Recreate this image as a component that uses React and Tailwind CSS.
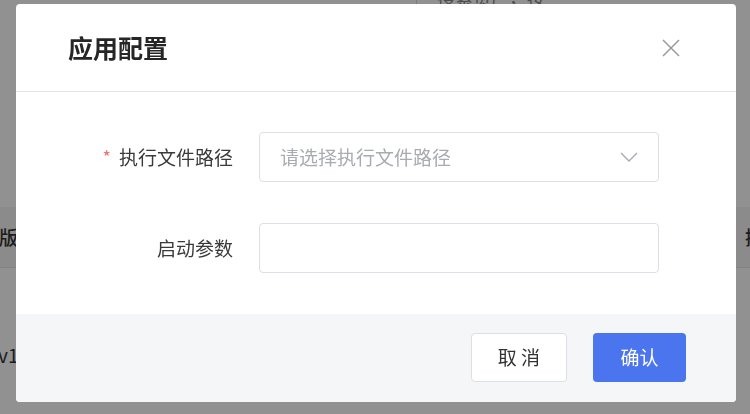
const font = { fontFamily: '"Noto Sans CJK SC", "Noto Sans", sans-serif' };

function BackgroundPage() {
  return (
    <div className="min-h-[414px] w-[750px] overflow-hidden bg-white text-[#333]">
      <div className="flex h-[92px] items-start">
        <div className="ml-[416px] h-[40px] w-px bg-[#d9d9d9]" />
        <span className="ml-[20px] mt-[-16px] text-[18px] text-[#888]">搜索资产，按</span>
      </div>
      <div className="mt-[115px] flex h-[61px] items-center justify-between border-b border-[#e6e6e6] bg-[#f5f5f5] text-[19px] font-medium">
        <span className="ml-[-1px]">版本</span>
        <span className="mr-[-33px]">操作</span>
      </div>
      <div className="flex h-[176px] items-center pb-[2px] text-[19px]">
        <span className="ml-[-2px]">v1.0.0</span>
      </div>
    </div>
  );
}

function FormRow({ label, required, children }) {
  return (
    <div className="flex items-center">
      <div className="flex w-[217px] items-center justify-end text-[19px] text-[#3a3a3a]">
        {required && <span className="mr-[8px] mt-[-2px] text-[18px] text-[#f56c6c]">*</span>}
        {label}
      </div>
      <div className="ml-[26px] w-[400px]">{children}</div>
    </div>
  );
}

export default function App() {
  return (
    <div className="relative h-[414px] w-[750px] overflow-hidden" style={font}>
      <BackgroundPage />
      <div className="fixed inset-0 bg-black/[0.43] pl-[16px] pt-[4px]">
        <div className="flex h-[398px] w-[720px] flex-col overflow-hidden rounded-[4px] bg-white">
          <div className="flex h-[88px] shrink-0 items-center justify-between border-b border-[#e4e4e9] pl-[52px] pr-[56px]">
            <h2 className="text-[25px] font-semibold text-[#262626]">应用配置</h2>
            <svg width="18" height="18" viewBox="0 0 18 18" fill="none" stroke="#9a9a9a" strokeWidth="1.5">
              <path d="M1 1l16 16M17 1L1 17" />
            </svg>
          </div>
          <div className="flex flex-1 flex-col gap-[41px] pt-[40px]">
            <FormRow label="执行文件路径" required>
              <div className="flex h-[50px] items-center justify-between rounded-[4px] border border-[#dcdfe6] pl-[20px] pr-[20px]">
                <span className="text-[19px] text-[#a8abb2]">请选择执行文件路径</span>
                <svg width="18" height="10" viewBox="0 0 18 10" fill="none" stroke="#a8abb2" strokeWidth="1.4">
                  <path d="M1 1l8 8 8-8" />
                </svg>
              </div>
            </FormRow>
            <FormRow label="启动参数">
              <div className="h-[50px] rounded-[4px] border border-[#dcdfe6]" />
            </FormRow>
          </div>
          <div className="flex h-[88px] shrink-0 items-start justify-end gap-[26px] bg-[#f5f6f8] pr-[50px] pt-[19px]">
            <button className="h-[49px] w-[96px] rounded-[4px] border border-[#dcdfe6] bg-white text-[19px] text-[#333]">
              取 消
            </button>
            <button className="h-[49px] w-[93px] rounded-[4px] bg-[#4b75ee] text-[19px] text-white">
              确认
            </button>
          </div>
        </div>
      </div>
    </div>
  );
}
